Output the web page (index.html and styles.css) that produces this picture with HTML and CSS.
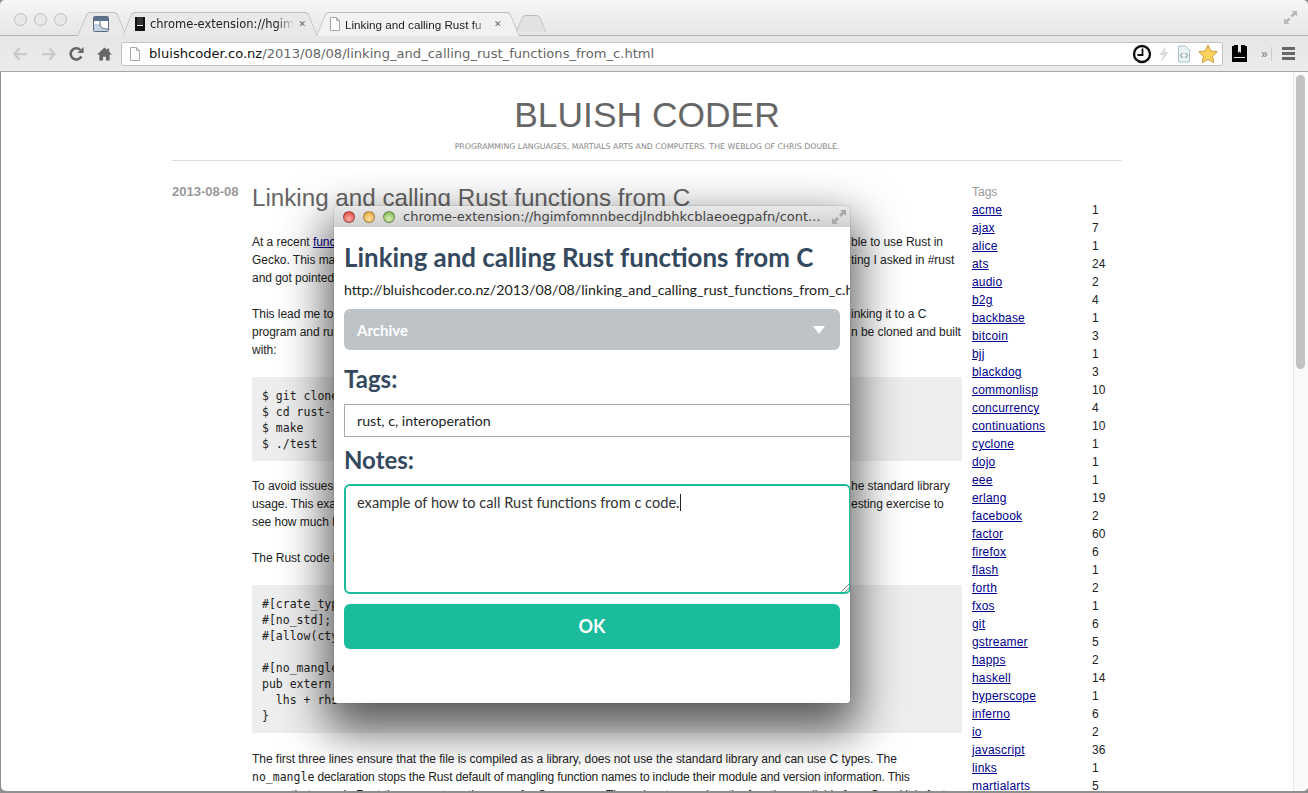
FILE: index.html
```html
<!DOCTYPE html>
<html lang="en">
<head>
    <meta charset="UTF-8">
    <title>Linking and calling Rust functions from C</title>
    <link rel="stylesheet" href="styles.css">
</head>
<body>
    <!-- Browser chrome -->
    <header class="chrome">
        <div class="tabbar">
            <div class="lights">
                <span class="light"></span><span class="light"></span><span class="light"></span>
            </div>
            <div class="tab tab-pinned">
                <svg width="16" height="16" viewBox="0 0 16 16"><rect x="0.5" y="0.5" width="15" height="15" rx="1" fill="#fff" stroke="#5d6d80"/><rect x="1" y="1" width="14" height="4" fill="#5d7290"/><path d="M1 8h6c0 3 2 5 8 5v2H1z" fill="#c4d2e4"/><path d="M7 5v3M7 8c0 3 2 5 8 5" fill="none" stroke="#5d6d80"/></svg>
            </div>
            <div class="tab tab-second">
                <svg class="tab-icon" width="12" height="14" viewBox="0 0 12 14"><path d="M1 0h2v9h6V0h2v14H1z" fill="#111"/><path d="M3 0h6v8H3z" fill="#333"/></svg>
                <span class="tab-title">chrome-extension://hgimf</span>
                <span class="tab-close">&#10005;</span>
            </div>
            <div class="tab tab-active">
                <svg class="tab-icon" width="12" height="14" viewBox="0 0 12 14"><path d="M1.5 .5h6l3 3v10h-9z" fill="#fff" stroke="#a8a8a8"/><path d="M7.5 .5v3h3" fill="none" stroke="#a8a8a8"/></svg>
                <span class="tab-title">Linking and calling Rust fu</span>
                <span class="tab-close">&#10005;</span>
            </div>
            <div class="tab tab-new"></div>
            <svg class="fullscreen" width="15" height="15" viewBox="0 0 16 16"><path d="M9 1h6v6l-2-2-3 3-2-2 3-3zM7 15H1V9l2 2 3-3 2 2-3 3z" fill="#b9b9b9"/></svg>
        </div>
        <div class="toolbar">
            <svg class="tool" width="15" height="14" viewBox="0 0 16 14"><path d="M7 1 1.500 7 7 13M2 7h13" fill="none" stroke="#c9c9c9" stroke-width="2.400"/></svg>
            <svg class="tool" width="15" height="14" viewBox="0 0 16 14"><path d="M9 1l5.500 6L9 13M14 7H1" fill="none" stroke="#c9c9c9" stroke-width="2.400"/></svg>
            <svg class="tool" width="15" height="16" viewBox="0 0 16 16"><path d="M13.200 10.500A6 6 0 1 1 12 3.600" fill="none" stroke="#666" stroke-width="2.800"/><path d="M9 7h6.500V.5z" fill="#666"/></svg>
            <svg class="tool tool-last" width="15" height="16" viewBox="0 0 16 16"><path d="M8 1 0 8.500h2.500V15h4v-4h3v4h4V8.500H16L13 5.700V2h-2v1.800z" fill="#666"/></svg>
            <div class="omnibox">
                <svg width="12" height="14" viewBox="0 0 12 14"><path d="M1.500 .5h6l3 3v10h-9z" fill="#fff" stroke="#a8a8a8"/><path d="M7.500 .5v3h3" fill="none" stroke="#a8a8a8"/></svg>
                <span class="url"><b>bluishcoder.co.nz</b>/2013/08/08/linking_and_calling_rust_functions_from_c.html</span>
                <div class="omni-icons">
                    <svg width="20" height="20" viewBox="0 0 20 20"><circle cx="10" cy="10" r="8" fill="#fff" stroke="#111" stroke-width="2.400"/><path d="M10.500 4.500V11H5.500" fill="none" stroke="#111" stroke-width="1.800"/></svg>
                    <svg width="12" height="18" viewBox="0 0 12 18"><path d="M8 1 1 10h4l-2 7 8-10H7z" fill="#dcdcdc"/></svg>
                    <svg width="16" height="18" viewBox="0 0 16 18"><path d="M2.500 1h7l4 4v12h-11z" fill="#e8f1f4" stroke="#a9c2c9"/><path d="M6.500 8 4.500 10.500l2 2.500M9.500 8l2 2.500-2 2.500" fill="none" stroke="#6b8791"/></svg>
                    <svg width="20" height="19" viewBox="0 0 20 19"><path d="M10 1l2.800 5.900 6.400.8-4.700 4.400 1.200 6.400L10 15.400 4.300 18.500l1.200-6.400L.8 7.700l6.400-.8z" fill="#fbd25e" stroke="#c99a3a"/></svg>
                </div>
            </div>
            <svg class="tool-mark" width="15" height="17" viewBox="0 0 15 17"><path d="M0 1h2v12h11V1h2v16H0z" fill="#000"/><path d="M2 0h4v8l1.500-1.500L9 8V0h4v12H2z" fill="#000"/></svg>
            <span class="more">&raquo;</span>
            <div class="menu"><i></i><i></i><i></i></div>
        </div>
    </header>

    <!-- Blog page -->
    <div class="viewport">
        <div class="page">
            <div class="site-head">
                <h1>BLUISH CODER</h1>
                <p class="tagline">PROGRAMMING LANGUAGES, MARTIALS ARTS AND COMPUTERS. THE WEBLOG OF CHRIS DOUBLE.</p>
            </div>
            <div class="columns">
                <div class="date">2013-08-08</div>
                <main class="post">
                    <h2>Linking and calling Rust functions from C</h2>
                    <div class="para">
                        <div class="line"><span>At a recent <a href="#">function</a></span><span>ble to use Rust in</span></div>
                        <div class="line"><span>Gecko. This made me</span><span>ting I asked in #rust</span></div>
                        <div class="line"><span>and got pointed</span></div>
                    </div>
                    <div class="para">
                        <div class="line"><span>This lead me to</span><span>inking it to a C</span></div>
                        <div class="line"><span>program and running</span><span>n be cloned and built</span></div>
                        <div class="line"><span>with:</span></div>
                    </div>
                    <pre class="code">$ git clone
$ cd rust-
$ make
$ ./test</pre>
                    <div class="para">
                        <div class="line"><span>To avoid issues</span><span>he standard library</span></div>
                        <div class="line"><span>usage. This example</span><span>esting exercise to</span></div>
                        <div class="line"><span>see how much l</span></div>
                    </div>
                    <div class="para">
                        <div class="line"><span>The Rust code i</span></div>
                    </div>
                    <pre class="code code-rust">#[crate_type
#[no_std];
#[allow(ctypes)]

#[no_mangle]
pub extern
  lhs + rhs
}</pre>
                    <div class="para">
                        <div class="line"><span>The first three lines ensure that the file is compiled as a library, does not use the standard library and can use C types. The</span></div>
                        <div class="line line-tight"><span><code>no_mangle</code> declaration stops the Rust default of mangling function names to include their module and version information. This</span></div>
                        <div class="line"><span>means that even in Rust the name stays the same for C programs. The pub extern makes the function available from C and it is fast.</span></div>
                    </div>
                </main>
                <aside class="tags">
                    <div class="tags-title">Tags</div>
                    <table>
                        <tr><td><a href="#">acme</a></td><td>1</td></tr>
                        <tr><td><a href="#">ajax</a></td><td>7</td></tr>
                        <tr><td><a href="#">alice</a></td><td>1</td></tr>
                        <tr><td><a href="#">ats</a></td><td>24</td></tr>
                        <tr><td><a href="#">audio</a></td><td>2</td></tr>
                        <tr><td><a href="#">b2g</a></td><td>4</td></tr>
                        <tr><td><a href="#">backbase</a></td><td>1</td></tr>
                        <tr><td><a href="#">bitcoin</a></td><td>3</td></tr>
                        <tr><td><a href="#">bjj</a></td><td>1</td></tr>
                        <tr><td><a href="#">blackdog</a></td><td>3</td></tr>
                        <tr><td><a href="#">commonlisp</a></td><td>10</td></tr>
                        <tr><td><a href="#">concurrency</a></td><td>4</td></tr>
                        <tr><td><a href="#">continuations</a></td><td>10</td></tr>
                        <tr><td><a href="#">cyclone</a></td><td>1</td></tr>
                        <tr><td><a href="#">dojo</a></td><td>1</td></tr>
                        <tr><td><a href="#">eee</a></td><td>1</td></tr>
                        <tr><td><a href="#">erlang</a></td><td>19</td></tr>
                        <tr><td><a href="#">facebook</a></td><td>2</td></tr>
                        <tr><td><a href="#">factor</a></td><td>60</td></tr>
                        <tr><td><a href="#">firefox</a></td><td>6</td></tr>
                        <tr><td><a href="#">flash</a></td><td>1</td></tr>
                        <tr><td><a href="#">forth</a></td><td>2</td></tr>
                        <tr><td><a href="#">fxos</a></td><td>1</td></tr>
                        <tr><td><a href="#">git</a></td><td>6</td></tr>
                        <tr><td><a href="#">gstreamer</a></td><td>5</td></tr>
                        <tr><td><a href="#">happs</a></td><td>2</td></tr>
                        <tr><td><a href="#">haskell</a></td><td>14</td></tr>
                        <tr><td><a href="#">hyperscope</a></td><td>1</td></tr>
                        <tr><td><a href="#">inferno</a></td><td>6</td></tr>
                        <tr><td><a href="#">io</a></td><td>2</td></tr>
                        <tr><td><a href="#">javascript</a></td><td>36</td></tr>
                        <tr><td><a href="#">links</a></td><td>1</td></tr>
                        <tr><td><a href="#">martialarts</a></td><td>5</td></tr>
                    </table>
                </aside>
            </div>
        </div>
        <div class="scrollbar"><div class="thumb"></div></div>
    </div>

    <!-- Extension popup window -->
    <section class="popup">
        <div class="popup-bar">
            <span class="dot dot-red"></span><span class="dot dot-yellow"></span><span class="dot dot-green"></span>
            <span class="popup-url">chrome-extension://hgimfomnnbecdjlndbhkcblaeoegpafn/cont...</span>
            <svg width="16" height="16" viewBox="0 0 16 16"><path d="M9 1h6v6l-2-2-3 3-2-2 3-3zM7 15H1V9l2 2 3-3 2 2-3 3z" fill="#a9a9a9"/></svg>
        </div>
        <div class="popup-body">
            <h3>Linking and calling Rust functions from C</h3>
            <div class="link">http://bluishcoder.co.nz/2013/08/08/linking_and_calling_rust_functions_from_c.html</div>
            <div class="select"><span>Archive</span><i class="caret"></i></div>
            <label class="field-label">Tags:</label>
            <div class="input">rust, c, interoperation</div>
            <label class="field-label field-notes">Notes:</label>
            <div class="textarea">example of how to call Rust functions from c code.<i class="cursor"></i>
                <svg class="grip" width="8" height="8" viewBox="0 0 8 8"><path d="M0 8 8 0M4 8l4-4" stroke="#888" fill="none"/></svg>
            </div>
            <div class="ok">OK</div>
        </div>
    </section>
</body>
</html>
```

FILE: styles.css
```css
* {
    box-sizing: border-box;
}
html, body {
    margin: 0;
    height: 793px;
    overflow: hidden;
}
body {
    position: relative;
    font-family: "Liberation Sans", Arial, sans-serif;
    font-size: 12px;
    color: #222;
    background-color: #8f8f8f;
}
a {
    color: #00008b;
}

/* Browser chrome */
.chrome {
    height: 72px;
    background: linear-gradient(#f6f6f6, #e6e6e6 36px, #ececec 72px);
    border-bottom: 1px solid #a9a9a9;
    border-radius: 5px 5px 0 0;
}
.tabbar {
    display: flex;
    align-items: flex-end;
    height: 36px;
    padding-left: 14px;
    position: relative;
    border-bottom: 1px solid #b5b5b5;
}
.lights {
    display: flex;
    gap: 7px;
    align-self: flex-start;
    margin-top: 13px;
    width: 68px;
}
.light {
    width: 13px;
    height: 13px;
    border-radius: 50%;
    border: 1px solid #bdbdbd;
    background-color: #e8e8e8;
}
.tab {
    position: relative;
    display: flex;
    align-items: center;
    gap: 4px;
    height: 24px;
    font-family: "DejaVu Sans", sans-serif;
    font-size: 11.5px;
    color: #222;
    z-index: 0;
    margin-bottom: -1px;
}
.tab::before, .tab::after {
    content: "";
    position: absolute;
    top: 0;
    bottom: 0;
    width: 60%;
    background-color: #e9e9e9;
    border: 1px solid #bcbcbc;
    border-bottom: none;
    z-index: -1;
}
.tab::before {
    left: 0;
    border-right: none;
    border-radius: 4px 0 0 0;
    transform: skewX(-22deg);
}
.tab::after {
    right: 0;
    border-left: none;
    border-radius: 0 4px 0 0;
    transform: skewX(22deg);
}
.tab-pinned {
    width: 40px;
    margin-right: 5px;
    padding-left: 11px;
}
.tab-second {
    width: 186px;
    margin-right: 8px;
    padding: 0 7px;
}
.tab-active {
    width: 194px;
    margin-right: 4px;
    padding: 0 13px 0 8px;
    font-family: "Liberation Sans", Arial, sans-serif;
    font-size: 11.7px;
}
.tab-active::before, .tab-active::after {
    background-color: #f2f2f2;
}
.tab-new {
    width: 24px;
    height: 17px;
    margin-bottom: 3px;
}
.tab-new::before, .tab-new::after {
    background-color: #e2e2e2;
}
.tab-title {
    flex: 1;
    min-width: 0;
    overflow: hidden;
    white-space: nowrap;
    -webkit-mask-image: linear-gradient(to right, #000 88%, transparent);
    mask-image: linear-gradient(to right, #000 88%, transparent);
}
.tab-close {
    font-size: 9px;
    color: #666;
}
.fullscreen {
    position: absolute;
    right: 10px;
    top: 10px;
}
.toolbar {
    display: flex;
    align-items: center;
    height: 35px;
    padding-left: 13px;
}
.tool {
    margin-right: 13px;
    flex: none;
}
.tool-last {
    margin-right: 9px;
}
.omnibox {
    display: flex;
    align-items: center;
    gap: 8px;
    width: 1102px;
    height: 24px;
    padding: 0 4px 0 7px;
    background-color: #fff;
    border: 1px solid #c2c2c2;
    border-radius: 3px;
    flex: none;
}
.url {
    flex: 1;
    font-family: "DejaVu Sans", sans-serif;
    font-size: 13.1px;
    color: #666;
    white-space: nowrap;
}
.url b {
    font-weight: normal;
    color: #111;
}
.omni-icons {
    display: flex;
    align-items: center;
    gap: 6px;
}
.tool-mark {
    margin-left: 9px;
    flex: none;
}
.more {
    margin-left: 14px;
    font-size: 12px;
    color: #777;
    width: 11px;
    border-right: 1px solid #ccc;
}
.menu {
    display: flex;
    flex-direction: column;
    gap: 2px;
    margin-left: 10px;
}
.menu i {
    display: block;
    width: 13px;
    height: 3px;
    background-color: #666;
}

/* Blog page */
.viewport {
    display: flex;
    height: 719px;
    overflow: hidden;
    background-color: #fff;
    margin-left: 1px;
    border-radius: 0 0 5px 5px;
}
.page {
    flex: 1;
    min-width: 0;
    padding-left: 171px;
}
.scrollbar {
    width: 15px;
    padding: 3px 0 0 2px;
    background-color: #fafafa;
    border-left: 1px solid #e8e8e8;
}
.thumb {
    width: 9px;
    height: 294px;
    border-radius: 5px;
    background-color: #c2c2c2;
}
.site-head {
    width: 950px;
    padding-top: 23px;
    height: 89px;
    text-align: center;
    border-bottom: 1px solid #ddd;
}
h1 {
    margin: 0;
    font-size: 35.4px;
    line-height: 41px;
    font-weight: normal;
    color: #666;
}
.tagline {
    margin: 5px 0 0;
    font-family: "DejaVu Sans", sans-serif;
    font-size: 7.85px;
    line-height: 12px;
    color: #888;
}
.columns {
    display: flex;
    width: 950px;
    padding-top: 22px;
}
.date {
    width: 80px;
    flex: none;
    font-size: 13px;
    font-weight: bold;
    color: #999;
    line-height: 17px;
}
.post {
    width: 710px;
    flex: none;
}
h2 {
    margin: 0 0 20px;
    font-size: 24.2px;
    line-height: 30px;
    font-weight: normal;
    color: #666;
}
.para {
    margin-bottom: 18px;
}
.line {
    display: grid;
    grid-template-columns: 599px 1fr;
    line-height: 18px;
    letter-spacing: -0.04px;
    white-space: nowrap;
}
.line-tight {
    letter-spacing: -0.15px;
}
code, .code {
    font-family: "DejaVu Sans Mono", monospace;
    font-size: 11.5px;
    letter-spacing: 0;
}
.code {
    margin: 0 0 16px;
    padding: 11px 10px 0;
    line-height: 16px;
    height: 84px;
    background-color: #eee;
}
.code-rust {
    height: 148px;
    margin-bottom: 17px;
}
.tags {
    margin-left: 10px;
}
.tags-title {
    color: #999;
    line-height: 18px;
}
.tags table {
    border-collapse: collapse;
}
.tags td {
    padding: 0;
    height: 18px;
    line-height: 18px;
}
.tags td:first-child {
    width: 120px;
    letter-spacing: 0.2px;
}

/* Extension popup window */
.popup {
    position: absolute;
    left: 334px;
    top: 206px;
    width: 516px;
    height: 497px;
    overflow: hidden;
    border-radius: 5px 5px 3px 3px;
    background-color: #fff;
    box-shadow: 0 0 1px #444, 0 20px 45px 8px rgba(0, 0, 0, 0.62);
}
.popup-bar {
    display: flex;
    align-items: center;
    height: 21px;
    padding: 0 3px 0 9px;
    background: linear-gradient(#e8e8e8, #d0d0d0);
    font-family: "DejaVu Sans", sans-serif;
    font-size: 13px;
    color: #444;
}
.dot {
    width: 12px;
    height: 12px;
    margin-right: 8px;
    border-radius: 50%;
    border: 1px solid rgba(0, 0, 0, 0.3);
    flex: none;
}
.dot-red {
    background: radial-gradient(circle at 50% 70%, #ffb0a8, #d8362c);
}
.dot-yellow {
    background: radial-gradient(circle at 50% 70%, #ffe6a0, #e0982a);
}
.dot-green {
    background: radial-gradient(circle at 50% 70%, #d8f0b0, #71b04a);
}
.popup-url {
    flex: 1;
    white-space: nowrap;
    overflow: hidden;
}
.popup-body {
    padding: 0 0 0 10px;
    font-family: Lato, sans-serif;
}
h3 {
    margin: 15px 0 0;
    font-size: 25.9px;
    line-height: 30px;
    font-weight: bold;
    color: #34495e;
    white-space: nowrap;
}
.link {
    margin-top: 9px;
    font-size: 14.2px;
    line-height: 17px;
    color: #222;
    white-space: nowrap;
}
.select {
    display: flex;
    align-items: center;
    justify-content: space-between;
    width: 496px;
    height: 41px;
    margin-top: 11px;
    padding: 0 15px 0 13px;
    border-radius: 6px;
    background-color: #bdc3c7;
    color: #fff;
    font-size: 15px;
    font-weight: bold;
}
.caret {
    width: 0;
    height: 0;
    border-left: 6px solid transparent;
    border-right: 6px solid transparent;
    border-top: 8px solid #fff;
}
.field-label {
    display: block;
    font-size: 24px;
    font-weight: bold;
    line-height: 28px;
    color: #34495e;
    margin-top: 15px;
}
.field-notes {
    margin-top: 9px;
}
.input {
    width: 520px;
    height: 33px;
    margin-top: 11px;
    padding: 0 12px;
    border: 1px solid #aaa;
    font-size: 14.2px;
    line-height: 31px;
    color: #222;
}
.textarea {
    position: relative;
    width: 507px;
    height: 110px;
    margin-top: 10px;
    padding: 7px 11px;
    border: 2px solid #1abc9c;
    border-radius: 6px;
    font-size: 14.6px;
    line-height: 20px;
    color: #333;
}
.cursor {
    display: inline-block;
    width: 1px;
    height: 17px;
    background-color: #222;
    vertical-align: text-bottom;
}
.grip {
    position: absolute;
    right: 0;
    bottom: 0;
}
.ok {
    width: 496px;
    height: 45px;
    margin-top: 10px;
    border-radius: 6px;
    background-color: #1abc9c;
    color: #fff;
    font-size: 18px;
    font-weight: bold;
    line-height: 45px;
    text-align: center;
}
```
